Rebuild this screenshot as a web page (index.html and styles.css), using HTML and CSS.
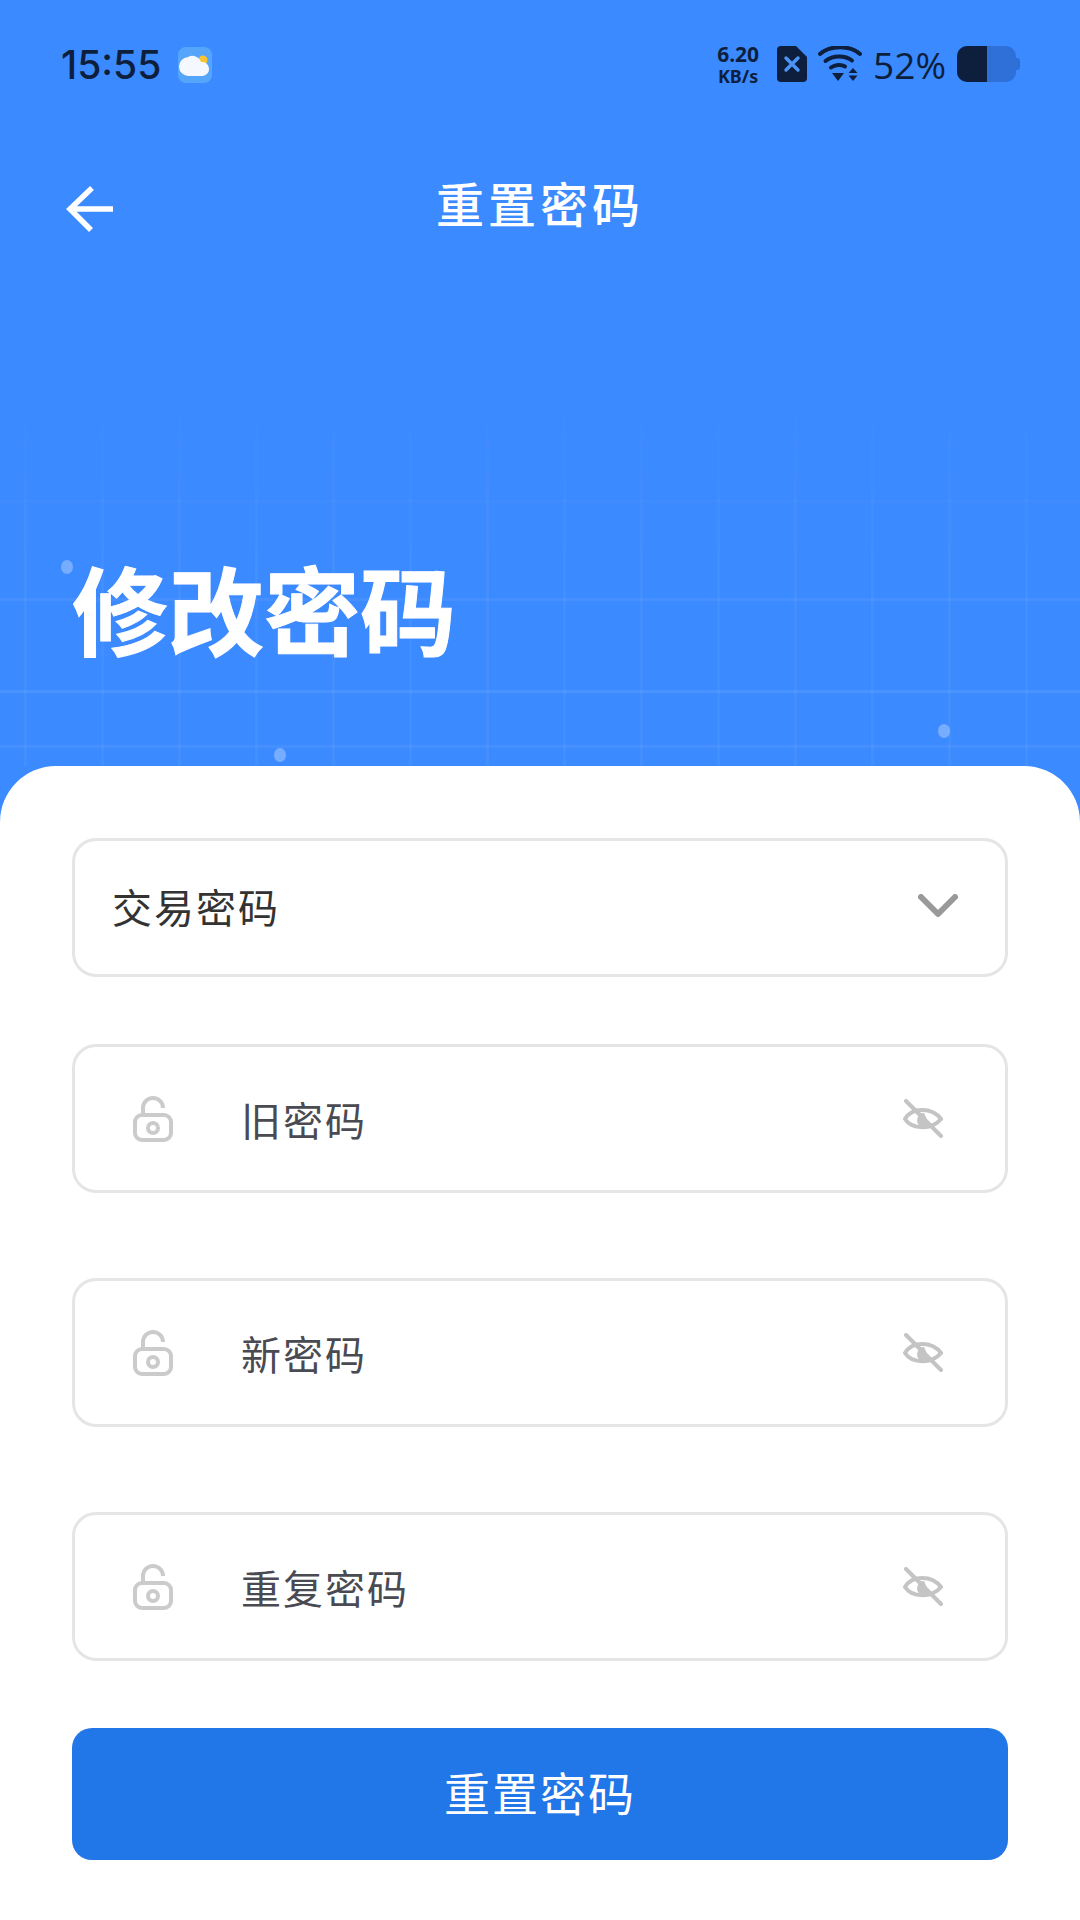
FILE: index.html
```html
<!DOCTYPE html>
<html>
<head>
  <meta name="viewport" content="width=device-width, initial-scale=1">
  <title>重置密码</title>
  <link rel="stylesheet" href="styles.css">
</head>
<body>
  <div class="hero">
    <div class="hero-grid"></div>
    <span class="spark spark-a"></span>
    <span class="spark spark-b"></span>
    <span class="spark spark-c"></span>

    <div class="status-bar">
      <div class="status-left">
        <span class="clock">15:55</span>
        <svg class="weather" width="34" height="36" viewBox="0 0 34 36">
          <rect width="34" height="36" rx="8" fill="#55a5fa"/>
          <circle cx="25" cy="13" r="4.500" fill="#fbc531"/>
          <path d="M11 29a9.500 9.500 0 0 1-1-19 9 9 0 0 1 13 5 6.500 6.500 0 0 1 2 14z" fill="#f5f8fe"/>
        </svg>
      </div>
      <div class="status-right">
        <div class="speed">
          <span class="speed-num">6.20</span>
          <span class="speed-unit">KB/s</span>
        </div>
        <svg width="30" height="36" viewBox="0 0 30 36">
          <path d="M4 0h15l11 11v21a4 4 0 0 1-4 4H4a4 4 0 0 1-4-4V4a4 4 0 0 1 4-4z" fill="#0d1f3c"/>
          <path d="M9 12l12 12M21 12L9 24" stroke="#4d93f5" stroke-width="3.500" stroke-linecap="round"/>
        </svg>
        <svg width="44" height="36" viewBox="0 0 44 36">
          <g fill="none" stroke="#0d1f3c" stroke-width="4" stroke-linecap="round">
            <path d="M2 8C12-1 32-1 42 8"/>
            <path d="M7.500 15C15 9 27 9 34 14.500"/>
            <path d="M13 21.500C17 18.500 23 18 27 20.500"/>
          </g>
          <path d="M14 27h12l-6 8z" fill="#0d1f3c"/>
          <path d="M35 22l4.500 5h-9zM35 35l4.500-5.500h-9z" fill="#0d1f3c"/>
        </svg>
        <span class="battery-pct">52%</span>
        <div class="battery">
          <span class="battery-fill"></span>
          <span class="battery-nub"></span>
        </div>
      </div>
    </div>

    <div class="nav">
      <svg class="back" width="48" height="48" viewBox="0 0 48 48">
        <path d="M47 24H4M26 3L4 24l21 21" fill="none" stroke="#fff" stroke-width="5.500"/>
      </svg>
      <span class="nav-title">重置密码</span>
    </div>

    <h1 class="hero-title">修改密码</h1>
  </div>

  <form class="card">
    <div class="select">
      <span>交易密码</span>
      <svg width="40" height="24" viewBox="0 0 40 24">
        <path d="M3 3l17 17L37 3" fill="none" stroke="#999" stroke-width="6" stroke-linecap="round" stroke-linejoin="round"/>
      </svg>
    </div>

    <div class="field">
      <svg class="lock" width="40" height="46" viewBox="0 0 40 46">
        <rect x="2" y="19" width="36" height="25" rx="7" fill="none" stroke="#cbcbcb" stroke-width="4"/>
        <circle cx="20" cy="32" r="5" fill="none" stroke="#cbcbcb" stroke-width="4"/>
        <path d="M10 19V12a10 10 0 0 1 20 0" fill="none" stroke="#cbcbcb" stroke-width="4"/>
      </svg>
      <span class="field-label">旧密码</span>
      <svg class="eye" width="40" height="40" viewBox="0 0 40 40">
        <path d="M2 20C9 8 29 8 38 20 29 31 9 31 2 20z" fill="none" stroke="#c4c4c4" stroke-width="4"/>
        <path d="M15 18a6 6 0 0 1 6-4l5 11a6 6 0 0 1-11-7z" fill="#c4c4c4"/>
        <path d="M3 2l35 35" stroke="#c4c4c4" stroke-width="4" stroke-linecap="round"/>
      </svg>
    </div>

    <div class="field">
      <svg class="lock" width="40" height="46" viewBox="0 0 40 46">
        <rect x="2" y="19" width="36" height="25" rx="7" fill="none" stroke="#cbcbcb" stroke-width="4"/>
        <circle cx="20" cy="32" r="5" fill="none" stroke="#cbcbcb" stroke-width="4"/>
        <path d="M10 19V12a10 10 0 0 1 20 0" fill="none" stroke="#cbcbcb" stroke-width="4"/>
      </svg>
      <span class="field-label">新密码</span>
      <svg class="eye" width="40" height="40" viewBox="0 0 40 40">
        <path d="M2 20C9 8 29 8 38 20 29 31 9 31 2 20z" fill="none" stroke="#c4c4c4" stroke-width="4"/>
        <path d="M15 18a6 6 0 0 1 6-4l5 11a6 6 0 0 1-11-7z" fill="#c4c4c4"/>
        <path d="M3 2l35 35" stroke="#c4c4c4" stroke-width="4" stroke-linecap="round"/>
      </svg>
    </div>

    <div class="field">
      <svg class="lock" width="40" height="46" viewBox="0 0 40 46">
        <rect x="2" y="19" width="36" height="25" rx="7" fill="none" stroke="#cbcbcb" stroke-width="4"/>
        <circle cx="20" cy="32" r="5" fill="none" stroke="#cbcbcb" stroke-width="4"/>
        <path d="M10 19V12a10 10 0 0 1 20 0" fill="none" stroke="#cbcbcb" stroke-width="4"/>
      </svg>
      <span class="field-label">重复密码</span>
      <svg class="eye" width="40" height="40" viewBox="0 0 40 40">
        <path d="M2 20C9 8 29 8 38 20 29 31 9 31 2 20z" fill="none" stroke="#c4c4c4" stroke-width="4"/>
        <path d="M15 18a6 6 0 0 1 6-4l5 11a6 6 0 0 1-11-7z" fill="#c4c4c4"/>
        <path d="M3 2l35 35" stroke="#c4c4c4" stroke-width="4" stroke-linecap="round"/>
      </svg>
    </div>

    <button type="button" class="submit">重置密码</button>
  </form>
</body>
</html>
```

FILE: styles.css
```css
* {
  box-sizing: border-box;
}

body {
  margin: 0;
  height: 1920px;
  overflow: hidden;
  background: #3c8aff;
  font-family: "Noto Sans CJK SC", "Noto Sans", sans-serif;
}

.hero {
  position: relative;
  height: 766px;
  color: white;
}

/* faint tech grid behind the title, horizontal lines are not evenly spaced */
.hero-grid {
  position: absolute;
  left: 0;
  right: 0;
  top: 380px;
  bottom: 0;
  background-image:
    repeating-linear-gradient(90deg, transparent 0 24px, rgba(255,255,255,0.045) 24px 27px, transparent 27px 77px),
    linear-gradient(to bottom,
      transparent 120px, rgba(255,255,255,0.03) 120px 123px,
      transparent 123px 218px, rgba(255,255,255,0.05) 218px 221px,
      transparent 221px 310px, rgba(255,255,255,0.07) 310px 313px,
      transparent 313px 365px, rgba(255,255,255,0.05) 365px 368px,
      transparent 368px);
  -webkit-mask-image: linear-gradient(to bottom, transparent, black 45%);
  mask-image: linear-gradient(to bottom, transparent, black 45%);
}

.spark {
  position: absolute;
  width: 12px;
  height: 14px;
  border-radius: 50%;
  background: rgba(255,255,255,0.3);
}

.spark-a { left: 61px; top: 560px; }
.spark-b { left: 274px; top: 748px; }
.spark-c { left: 938px; top: 724px; }

.status-bar {
  position: relative;
  height: 128px;
  padding: 0 60px 0 61px;
  display: flex;
  justify-content: space-between;
  align-items: center;
  color: #0d1f3c;
}

.status-left {
  display: flex;
  align-items: center;
  gap: 17px;
}

.clock {
  font-family: Inter, sans-serif;
  font-size: 39px;
  font-weight: 500;
  line-height: 1;
}

.weather {
  margin-top: 2px;
}

.status-right {
  display: flex;
  align-items: center;
  gap: 11px;
}

.speed {
  width: 48px;
  margin-right: 4px;
  display: flex;
  flex-direction: column;
  align-items: center;
  gap: 2px;
  font-family: "Noto Sans", sans-serif;
  font-weight: 700;
  line-height: 1;
}

.speed-num {
  font-size: 21px;
}

.speed-unit {
  font-size: 18px;
}

.battery-pct {
  font-family: "Open Sans", sans-serif;
  font-size: 37px;
  font-weight: 500;
  line-height: 1;
}

.battery {
  position: relative;
  width: 59px;
  height: 36px;
  margin-right: 4px;
  background: #2f6fd8;
  border-radius: 10px;
}

.battery-fill {
  display: block;
  width: 30px;
  height: 36px;
  background: #0d1f3c;
  border-radius: 10px 0 0 10px;
}

.battery-nub {
  position: absolute;
  right: -4px;
  top: 12px;
  width: 4px;
  height: 12px;
  background: #2f6fd8;
  border-radius: 0 3px 3px 0;
}

.nav {
  position: relative;
  height: 148px;
  display: flex;
  align-items: center;
  justify-content: center;
}

.back {
  position: absolute;
  left: 66px;
  top: 57px;
}

.nav-title {
  font-size: 48px;
  font-weight: 500;
  letter-spacing: 4px;
  line-height: 1;
}

.hero-title {
  position: relative;
  margin: 275px 0 0 72px;
  font-size: 96px;
  font-weight: 700;
  line-height: 112px;
  -webkit-text-stroke: 1px white;
}

.card {
  height: 1154px;
  padding: 72px 72px 0;
  background: white;
  border-radius: 56px 56px 0 0;
}

.select {
  height: 139px;
  margin-bottom: 67px;
  padding: 0 47px 3px 37px;
  display: flex;
  justify-content: space-between;
  align-items: center;
  border: 3px solid #e5e5e5;
  border-radius: 24px;
  font-size: 40px;
  letter-spacing: 2px;
  line-height: 1;
  color: #333;
}

.field {
  height: 149px;
  margin-bottom: 85px;
  padding: 0 62px 0 58px;
  display: flex;
  align-items: center;
  border: 3px solid #e5e5e5;
  border-radius: 24px;
}

.field:last-of-type {
  margin-bottom: 67px;
}

.field-label {
  margin-left: 68px;
  font-size: 40px;
  letter-spacing: 2px;
  color: #4a4a52;
}

.eye {
  margin-left: auto;
}

.submit {
  display: block;
  width: 100%;
  height: 132px;
  padding: 0 0 6px;
  border: none;
  border-radius: 20px;
  background: #2176e8;
  color: white;
  font-family: inherit;
  font-size: 46px;
  letter-spacing: 2px;
}
```
